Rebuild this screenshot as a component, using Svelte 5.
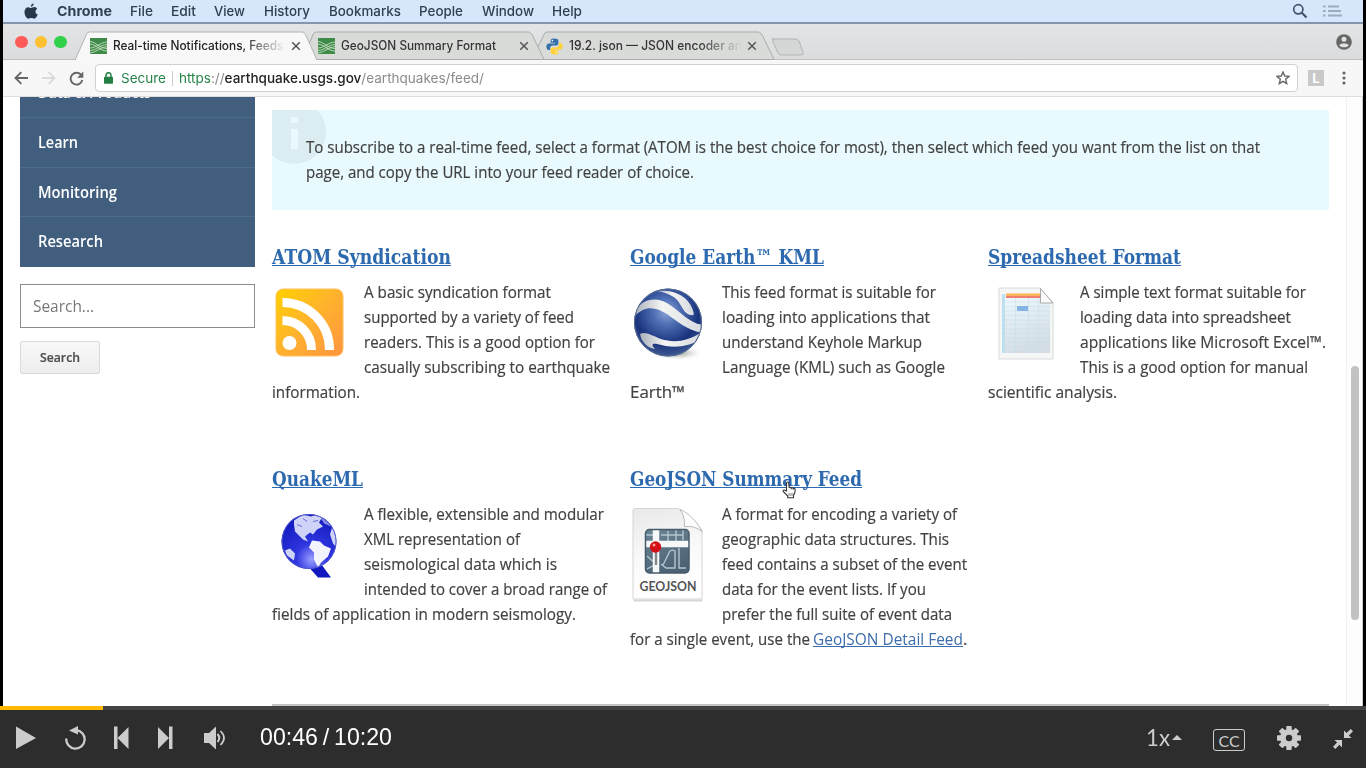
<script>
  const menus = [
    { t: 'File', w: 23, g: 18 }, { t: 'Edit', w: 25, g: 18 }, { t: 'View', w: 31, g: 18 },
    { t: 'History', w: 46, g: 19 }, { t: 'Bookmarks', w: 72, g: 19 }, { t: 'People', w: 44, g: 18 },
    { t: 'Window', w: 52, g: 19 }, { t: 'Help', w: 30, g: 18 }
  ];
  const feeds = [
    { id: 'rss', title: 'ATOM Syndication', tw: 179, side: [
      ['A basic syndication format', 187], ['supported by a variety of feed', 210],
      ['readers. This is a good option for', 231], ['casually subscribing to earthquake', 246]],
      last: ['information.', 88] },
    { id: 'earth', title: 'Google Earth™ KML', tw: 194, side: [
      ['This feed format is suitable for', 214], ['loading into applications that', 208],
      ['understand Keyhole Markup', 200], ['Language (KML) such as Google', 223]],
      last: ['Earth™', 55] },
    { id: 'sheet', title: 'Spreadsheet Format', tw: 193, side: [
      ['A simple text format suitable for', 226], ['loading data into spreadsheet', 211],
      ['applications like Microsoft Excel™.', 246], ['This is a good option for manual', 228]],
      last: ['scientific analysis.', 129] },
    { id: 'quake', title: 'QuakeML', tw: 91, side: [
      ['A flexible, extensible and modular', 240], ['XML representation of', 156],
      ['seismological data which is', 193], ['intended to cover a broad range of', 243]],
      last: ['fields of application in modern seismology.', 304] },
    { id: 'geo', title: 'GeoJSON Summary Feed', tw: 232, side: [
      ['A format for encoding a variety of', 235], ['geographic data structures. This', 227],
      ['feed contains a subset of the event', 245], ['data for the event lists. If you', 204],
      ['prefer the full suite of event data', 230]],
      last: ['for a single event, use the', 180], link: ['GeoJSON Detail Feed', 150] }
  ];

  // Condenses or widens a text run so it spans the given width.
  function fit(node, width) {
    const natural = node.getBoundingClientRect().width;
    node.style.width = width + 'px';
    node.style.transform = `scaleX(${width / natural})`;
  }
</script>

{#snippet usgs()}
  <svg class="fav" width="17" height="16" viewBox="0 0 17 16">
    <rect width="17" height="16" fill="#3f8a49" />
    <g fill="none" stroke="#c4dfc2" stroke-width=".9">
      <path d="M0 3.500C6 4 10 10.500 17 10.500M0 6C6 6.500 10 13 17 13M0 10C6 10 10 4.500 17 4M0 12.500C6 12.500 10 7 17 6.500M0 15C6 14.500 10 9.500 17 8.500" />
    </g>
  </svg>
{/snippet}

{#snippet cross()}
  <svg class="x" width="10" height="10" viewBox="0 0 10 10"><path d="M1.200 1.200l7.600 7.600M8.800 1.200L1.200 8.800" stroke="#5a5a5a" stroke-width="1.600" /></svg>
{/snippet}

<div class="screen">
  <div class="desktop">
    <header class="menubar">
      <svg class="apple" width="14" height="17" viewBox="0 0 14 17" fill="#27384c">
        <path d="M9.600.5c.1 1.700-1.200 3.200-2.800 3.300C6.600 2.200 8 .7 9.600.5zM7 5c.8 0 1.700-.9 3.200-.9 1.200 0 2.300.6 3 1.600-2.500 1.500-2.100 4.800.5 5.800-.7 1.900-2 4.200-3.500 4.200-1.100 0-1.500-.7-2.900-.7s-1.800.7-2.900.7C2.600 15.700.5 12.200.5 9c0-3 1.900-4.800 3.800-4.800C5.600 4.200 6.300 5 7 5z" />
      </svg>
      <b class="fit" use:fit={55}>Chrome</b>
      {#each menus as m}
        <span class="fit" style:margin-left="{m.g}px" use:fit={m.w}>{m.t}</span>
      {/each}
      <span class="grow"></span>
      <svg width="16" height="16" viewBox="0 0 16 16" fill="none" stroke="#43536a"><circle cx="6.300" cy="6.300" r="4.600" stroke-width="1.700" /><path d="M9.800 9.800l4.700 4.700" stroke-width="2.200" /></svg>
      <svg class="list" width="20" height="12" viewBox="0 0 20 12" stroke="#9cabc0" stroke-width="1.800"><path d="M0 1.500h2.500M0 6h2.500M0 10.500h2.500M5 1.500h11M5 6h13M5 10.500h14" /></svg>
    </header>

    <div class="tabstrip">
      <div class="lights"><i class="r"></i><i class="y"></i><i class="g"></i></div>
      <svg class="shapes" width="760" height="36" viewBox="75 24 760 36">
        <path d="M532 59.500l12-25q1-2.500 3-2.500h212l3 2.500 12 25z" fill="#d9dbd9" stroke="#aaadab" />
        <path d="M303 59.500l6-15 4-10q1-2.500 3-2.500h213l3 2.500 12 25z" fill="#d9dbd9" stroke="#aaadab" />
        <path d="M75 60l11.500-25.500q1-2.500 3-2.500h213q2 0 3 2.500L317 60" fill="#f8f8f8" stroke="#b0b2b2" />
        <path d="M772 39h24q2 0 3 2l4 11q1 3-2 3h-20q-2 0-3-2l-5-11q-1-3 1-3z" fill="#d5d7d7" stroke="#b3b5b5" />
      </svg>
      <div class="tab one">{@render usgs()}<span class="label fade"><span class="fit" use:fit={174}>Real-time Notifications, Feeds,</span></span>{@render cross()}</div>
      <div class="tab two">{@render usgs()}<span class="label"><span class="fit" use:fit={155}>GeoJSON Summary Format</span></span>{@render cross()}</div>
      <div class="tab three">
        <svg class="fav" width="17" height="17" viewBox="0 0 17 17">
          <path d="M8.200.5C5 .5 4.600 1.800 4.600 3v1.700h4v.8H2.800C1.200 5.500.4 7 .4 8.700s.9 3.200 2.200 3.200h1.500v-2c0-1.500 1.200-2.500 2.600-2.500h3.600c1.200 0 2.100-.9 2.100-2.100V3C12.400 1.200 10.800.5 8.200.5z" fill="#3571a8" />
          <path d="M8.800 16.500c3.200 0 3.600-1.300 3.600-2.500v-1.700h-4v-.8h5.800c1.600 0 2.400-1.500 2.400-3.200s-.9-3.200-2.200-3.200h-1.500v2c0 1.500-1.200 2.500-2.600 2.500H6.700c-1.200 0-2.100.9-2.100 2.100V14c0 1.800 1.600 2.500 4.200 2.500z" fill="#ffd23a" />
          <circle cx="6.400" cy="2.600" r=".8" fill="#fff" /><circle cx="10.600" cy="14.300" r=".8" fill="#fff" />
        </svg>
        <span class="label fade"><span class="fit" use:fit={173}>19.2. json — JSON encoder an</span></span>{@render cross()}
      </div>
      <svg class="user" width="16" height="16" viewBox="0 0 16 16"><circle cx="8" cy="8" r="7.800" fill="#666" /><circle cx="8" cy="5.200" r="2.500" fill="#dfe1e2" /><path d="M3.200 11.300C4 8.800 12 8.800 12.800 11.300 11 14 5 14 3.200 11.300z" fill="#dfe1e2" /></svg>
    </div>

    <div class="toolbar">
      <svg width="14" height="14" viewBox="0 0 14 14" fill="none" stroke="#666" stroke-width="1.900"><path d="M14 7H1.500M7.300 1.200L1.500 7l5.800 5.800" /></svg>
      <svg class="fwd" width="14" height="14" viewBox="0 0 14 14" fill="none" stroke="#dadada" stroke-width="1.900"><path d="M0 7h12.500M6.700 1.200L12.500 7l-5.800 5.800" /></svg>
      <svg class="reload" width="15" height="15" viewBox="0 0 15 15"><path d="M12.400 4.300A5.900 5.900 0 1 0 13.300 9" fill="none" stroke="#666" stroke-width="1.900" /><path d="M14.300.5v6.200H8.200z" fill="#666" /></svg>
      <div class="address">
        <svg width="9" height="12" viewBox="0 0 9 12"><rect y="4.800" width="9" height="7" rx=".7" fill="#238044" /><path d="M2 5V3.200a2.500 2.500 0 0 1 5 0V5" fill="none" stroke="#238044" stroke-width="1.500" /></svg>
        <span class="fit secure" use:fit={45}>Secure</span>
        <span class="rule"></span>
        <span class="fit url" use:fit={305}><em>https</em>://<b>earthquake.usgs.gov</b>/earthquakes/feed/</span>
        <span class="grow"></span>
        <svg width="14" height="14" viewBox="0 0 14 14"><path d="M7 1l1.700 4 4.300.4-3.300 2.900 1 4.300L7 10.300l-3.700 2.300 1-4.300L1 5.400 5.300 5z" fill="none" stroke="#666" stroke-width="1.400" /></svg>
      </div>
      <span class="ext">L</span>
      <svg class="dots" width="4" height="16" viewBox="0 0 4 16" fill="#666"><circle cx="2" cy="3" r="1.600" /><circle cx="2" cy="8" r="1.600" /><circle cx="2" cy="13" r="1.600" /></svg>
    </div>

    <div class="page">
      <aside>
        <nav>
          <a class="cut"><span class="fit" use:fit={113}>Data &amp; Products</span></a>
          <a><span class="fit" use:fit={40}>Learn</span></a>
          <a><span class="fit" use:fit={79}>Monitoring</span></a>
          <a class="end"><span class="fit" use:fit={65}>Research</span></a>
        </nav>
        <div class="field"><span class="fit" use:fit={61}>Search...</span></div>
        <button><span class="fit" use:fit={40}>Search</span></button>
      </aside>
      <main>
        <div class="notice">
          <svg class="info" width="54" height="54" viewBox="0 0 54 54"><circle cx="22" cy="22" r="32" fill="#dcedf2" /><path d="M19 7h7v6h-7zM19 19h7v20h-7z" fill="#eaf9fd" /></svg>
          <p><span class="fit" use:fit={954}>To subscribe to a real-time feed, select a format (ATOM is the best choice for most), then select which feed you want from the list on that</span></p>
          <p><span class="fit" use:fit={388}>page, and copy the URL into your feed reader of choice.</span></p>
        </div>
        <div class="grid">
          {#each feeds as f}
            <section>
              <h2><a class="fit" use:fit={f.tw}>{f.title}</a></h2>
              <div class="row">
                <div class="pic">
                  {#if f.id === 'rss'}
                    <svg width="74" height="84" viewBox="0 0 74 84">
                      <defs><linearGradient id="or" x1="0" y1="0" x2="1" y2="1"><stop offset="0" stop-color="#ffd000" /><stop offset=".45" stop-color="#ffb52b" /><stop offset="1" stop-color="#ff9440" /></linearGradient></defs>
                      <rect x="4" y="9" width="67" height="67" rx="7" fill="url(#or)" stroke="#ffc15c" />
                      <circle cx="17.500" cy="63" r="7" fill="#fff" />
                      <path d="M10.500 40.500A29 29 0 0 1 39.500 70M10.500 22.500A47 47 0 0 1 57.500 70" fill="none" stroke="#fff" stroke-width="9" />
                    </svg>
                  {:else if f.id === 'earth'}
                    <svg width="80" height="84" viewBox="0 0 80 84">
                      <defs>
                        <radialGradient id="eb" cx=".48" cy=".34" r=".66"><stop offset="0" stop-color="#8da5d8" /><stop offset=".3" stop-color="#4e6eb3" /><stop offset=".72" stop-color="#18327c" /><stop offset="1" stop-color="#3f5a92" /></radialGradient>
                        <linearGradient id="ew" x1="0" x2="1"><stop offset="0" stop-color="#a9b0bb" /><stop offset=".4" stop-color="#f5f5f3" /><stop offset="1" stop-color="#d5d9df" /></linearGradient>
                        <radialGradient id="es"><stop offset="0" stop-color="#858c80" /><stop offset="1" stop-color="#fff" stop-opacity="0" /></radialGradient>
                        <clipPath id="ec"><circle cx="38" cy="42" r="33.500" /></clipPath>
                      </defs>
                      <ellipse cx="48" cy="73" rx="26" ry="8" fill="url(#es)" />
                      <circle cx="38" cy="42.500" r="34" fill="url(#eb)" />
                      <g clip-path="url(#ec)" fill="url(#ew)">
                        <path d="M5 32C12 18 27 16 40 25c12 8 19 18 33 20v8C57 50 48 42 37 34 26 27 15 25 5 36z" />
                        <path d="M27 11c18-2 31 6 35 17 2 5 3 8-1 7-5 0-8-6-11-11C46 17 39 13 27 11z" />
                        <path d="M10 54c5-3 11 1 21 5 12 4 26 3 41-7l-3 8C56 68 41 68 27 64c-5-1-6 1-2 5C17 68 11 61 10 54z" />
                      </g>
                      <circle cx="38" cy="42.500" r="33.500" fill="none" stroke="#5b6f93" />
                    </svg>
                  {:else if f.id === 'sheet'}
                    <svg width="74" height="84" viewBox="0 0 74 84">
                      <defs><linearGradient id="sg" x1="0" y1="0" x2=".3" y2="1"><stop offset="0" stop-color="#effaff" /><stop offset="1" stop-color="#d3dde3" /></linearGradient></defs>
                      <path d="M11 8h41l13 14.500V79H11z" fill="#f5f6f6" stroke="#d8dadb" />
                      <path d="M14 14h39v9h9v50H14z" fill="url(#sg)" />
                      <path d="M14 14h3v59h-3z" fill="#bce0f1" />
                      <path d="M18 13.500h35v2.200H18z" fill="#ffb347" /><path d="M18 15.700h35V18H18z" fill="#f0806c" />
                      <path d="M27.500 18v55M40.500 18v55M50.500 18v55M14 22h48M14 26.500h48M14 31h48M14 35.500h48M14 40h48M14 44.500h48M14 49h48M14 53.500h48M14 58h48M14 62.500h48M14 67h48" stroke="#c3dfeb" stroke-width=".5" />
                      <rect x="29" y="26" width="11" height="5" fill="#86b5e5" />
                      <path d="M52.500 8.500V23h12.500z" fill="#fafafa" stroke="#999" stroke-width=".8" />
                    </svg>
                  {:else if f.id === 'quake'}
                    <svg width="74" height="84" viewBox="0 0 74 84">
                      <defs><radialGradient id="qb" cx=".55" cy=".82" r=".8"><stop offset="0" stop-color="#9ba0ff" /><stop offset=".35" stop-color="#3037df" /><stop offset="1" stop-color="#1018bd" /></radialGradient>
                        <clipPath id="qc"><circle cx="37" cy="39" r="27.500" /></clipPath></defs>
                      <g transform="translate(0 .5)">
                      <path d="M31 64l7 2 8 9h13L48 60z" fill="#1118bd" />
                      <circle cx="37" cy="39" r="27.500" fill="url(#qb)" />
                      <g clip-path="url(#qc)" fill="#cfd3f8">
                        <path d="M22 18l9-6 8 2 6-2 5 3-3 5 4 4-6 3-4 5-3-2-5 4 3 5-5-2-8-8-1-7z" />
                        <path d="M40 38l8 1 4 4 7 3-3 8-7 6-3 5-4-8 0-7-5-5z" fill="#f4f4ff" />
                        <path d="M60 25l6 7v15l-5-6-3-9zM13 48l5-2 5 5-1 7-7-5z" />
                        <path d="M47 13q9 4 12 11l-7-3z" opacity=".6" />
                      </g>
                      <path d="M31 16l4 3M25 22l5 2M41 19l5-1" stroke="#666ed8" fill="none" />
                      <circle cx="37" cy="39" r="27" fill="none" stroke="#5058cf" />
                      </g>
                    </svg>
                  {:else}
                    <svg width="78" height="104" viewBox="0 0 78 104">
                      <defs><linearGradient id="gg" x1="0" y1="0" y2="1" x2=".2"><stop offset="0" stop-color="#e9e9e9" /><stop offset=".6" stop-color="#fafafa" /><stop offset="1" stop-color="#fff" /></linearGradient>
                        <linearGradient id="gm" x1="0" y1="0" x2=".4" y2="1"><stop offset="0" stop-color="#6e8595" /><stop offset="1" stop-color="#4c6375" /></linearGradient><clipPath id="gc"><rect x="15.500" y="26.500" width="43.500" height="43.500" rx="4" /></clipPath></defs>
                      <g transform="translate(0 1)">
                      <path d="M3.500 97.500h69" stroke="#999" stroke-width="2" opacity=".4" />
                      <path d="M3 8q0-2.500 2-2.500h43q12 6 24 22V96H3z" fill="url(#gg)" stroke="#d5d5d5" />
                      <path d="M50 6.500q5 6 4.500 17 11-1 17.500 5C69 21 58 9 50 6.500z" fill="#fdfdfd" stroke="#aaa" stroke-width=".8" />
                      <g clip-path="url(#gc)"><rect x="15" y="26" width="45" height="45" fill="url(#gm)" />
                        <g fill="none" stroke="#b5c5d0" stroke-width="1.400"><path d="M16 32h7M31 32h22M38 28v10M46 27v11M53 27v10M49 45v20h7M33 62l5-10q2-7 7-4v17h-9l-5-4M17 53l9 8-9 5" /></g>
                        <path d="M26 26v45M15 41h45" stroke="#f6f8f9" stroke-width="6.500" /></g>
                      <rect x="15.500" y="26.500" width="43.500" height="43.500" rx="4" fill="none" stroke="#455b6c" stroke-width="1.500" />
                      <path d="M26 49v13" stroke="#7e878c" stroke-width="2.400" /><circle cx="25.500" cy="44" r="5.700" fill="#d50f18" /><circle cx="24" cy="42" r="1.500" fill="#ff9a9a" />
                      <text x="9.500" y="87.500" textLength="57" lengthAdjust="spacingAndGlyphs">GEOJSON</text>
                      </g>
                    </svg>
                  {/if}
                </div>
                <div>
                  {#each f.side as [text, w]}
                    <p><span class="fit" use:fit={w}>{text}</span></p>
                  {/each}
                </div>
              </div>
              <p><span class="fit" use:fit={f.last[1]}>{f.last[0]}</span>{#if f.link}<a class="detail fit" use:fit={f.link[1]}>{f.link[0]}</a>.{/if}</p>
            </section>
          {/each}
        </div>
        <hr />
      </main>
      <div class="track"><div class="thumb"></div></div>
      <svg class="hand" width="15" height="18" viewBox="0 0 15 18"><path d="M4.500 10V2.200c0-1.600 2-1.600 2.200 0L7.200 7c.3-1.200 1.900-1 2.100.3.500-1 1.900-.7 2 .5.800-.7 1.900-.2 1.900.9 0 3-.6 4.500-1.700 6v2H5.700v-1.700L1.200 10.500c-.6-1.300.7-2 1.700-1.200z" fill="#fff" stroke="#333" stroke-width="1.100" /><path d="M7 12v3M9 12v3M11 12v3" stroke="#555" stroke-width=".8" /></svg>
    </div>
  </div>

  <footer>
    <div class="progress"><div></div></div>
    <div class="controls">
      <svg width="20" height="24" viewBox="0 0 20 24" fill="#ccc"><path d="M0 .5L20 12 0 23z" /></svg>
      <svg class="replay" width="22" height="24" viewBox="0 0 22 24"><path d="M1.300 12.500A9.200 9.200 0 1 0 11 4.200" fill="none" stroke="#ccc" stroke-width="2.300" /><path d="M4 4.600L13 0v8.600z" fill="#ccc" /></svg>
      <svg class="prev" width="15" height="24" viewBox="0 0 15 24" fill="#ccc"><path d="M0 .5h3.500v22.500H0zM14.500 1v22L3.500 12z" /></svg>
      <svg class="next" width="15" height="24" viewBox="0 0 15 24" fill="#ccc"><path d="M11 .5h3.500v22.500H11zM0 1v22l11-11z" /></svg>
      <svg class="vol" width="24" height="24" viewBox="0 0 24 24"><path d="M0 7h5l7-6.500v23L5 17H0z" fill="#ccc" /><path d="M13.500 8q3.500 4 0 8" fill="none" stroke="#ccc" stroke-width="2" /><path d="M16.500 5q7 7 0 14" fill="none" stroke="#ccc" stroke-width="1.700" /><path d="M19 3q5 3 3.500 10Q22 17 19 20.500" fill="none" stroke="#ccc" stroke-width="0" /></svg>
      <span class="fit time" use:fit={132}>00:46<i></i>/<i></i>10:20</span>
      <span class="grow"></span>
      <span class="fit rate" use:fit={24}>1x</span>
      <svg class="caret" width="10" height="5" viewBox="0 0 10 5"><path d="M0 5l5-5 5 5z" fill="#ccc" /></svg>
      <span class="cc">CC</span>
      <svg class="gear" width="24" height="24" viewBox="0 0 24 24">
        <g fill="#ccc"><rect x="9.300" y="0" width="5.400" height="24" rx=".8" /><rect x="9.300" y="0" width="5.400" height="24" rx=".8" transform="rotate(45 12 12)" /><rect x="9.300" y="0" width="5.400" height="24" rx=".8" transform="rotate(90 12 12)" /><rect x="9.300" y="0" width="5.400" height="24" rx=".8" transform="rotate(135 12 12)" /><circle cx="12" cy="12" r="9" /></g><circle cx="12" cy="12" r="3.200" fill="#2d2d2d" />
      </svg>
      <svg class="shrink" width="20" height="20" viewBox="0 0 20 20"><path d="M11 1.500V9h7.500l-2.700-2.600L20 2.300 17.700 0l-4.100 4.100zM1.500 11H9v7.500l-2.600-2.700L2.300 20 0 17.700l4.100-4.100z" fill="#ccc" /></svg>
    </div>
  </footer>
</div>

<style>
  :global(body) { background: #000; overflow: hidden; }
  .screen { width: 1366px; height: 768px; display: flex; flex-direction: column; background: #000; }
  .desktop { height: 706px; margin: 0 3px; display: flex; flex-direction: column; overflow: hidden; font-family: Inter, sans-serif; }
  .fit { display: inline-block; white-space: nowrap; transform-origin: 0 50%; flex: none; }
  .grow { flex: 1; }
  svg { display: block; flex: none; }
  .menubar { height: 22px; box-sizing: content-box; border-bottom: 2px solid #8496ac; background: #d7e6fa; display: flex; align-items: center; font-size: 13.500px; font-weight: 500; color: #304054; padding: 0 20px 0 21px; }
  .menubar b { margin-left: 19px; font-weight: 700; }
  .list { margin-left: 15px; }
  .tabstrip { height: 35px; background: linear-gradient(#e2e4e5, #dadcde); border-bottom: 1px solid #bcbebf; display: flex; align-items: center; position: relative; }
  .lights { display: flex; gap: 7px; margin: 1px 0 0 12px; width: 75px; }
  .lights i { width: 12.500px; height: 12.500px; border-radius: 50%; }
  .r { background: #ff5b58; } .y { background: #ffc130; } .g { background: #30d048; }
  .shapes { position: absolute; left: 72px; top: 0; }
  .tab { position: relative; display: flex; align-items: center; font-size: 12.500px; font-weight: 500; color: #333; padding-top: 9px; }
  .one { color: #222; }
  .label { margin-left: 6px; width: 173px; overflow: hidden; height: 20px; line-height: 20px; white-space: nowrap; }
  .fade { mask-image: linear-gradient(to right, #000 75%, transparent 100%); }
  .x { margin-left: 5px; }
  .two { margin-left: 17px; }
  .three { margin-left: 17px; }
  .user { margin: 1px 11px 0 auto; }
  .toolbar { height: 36px; background: #f7f7f7; border-bottom: 1px solid #dedede; display: flex; align-items: center; padding: 0 17px 0 11px; }
  .fwd { margin-left: 14px; }
  .reload { margin-left: 13px; }
  .address { flex: 1; margin-left: 11px; height: 26px; background: #fff; border: 1px solid #d0d0d0; border-radius: 4px; display: flex; align-items: center; padding: 0 7px 0 8px; font-size: 13.500px; }
  .secure { margin-left: 8px; color: #28844a; }
  .rule { width: 1px; height: 15px; background: #ccc; margin: 0 6px 0 6px; }
  .url { color: #8b8b8b; } .url em { font-style: normal; color: #28844a; } .url b { font-weight: 500; color: #222; }
  .ext { width: 16px; height: 16px; background: #c9c9c9; color: #fff; font-size: 13px; font-weight: 700; line-height: 16px; text-align: center; margin: 0 18px 0 10px; }
  .page { height: 609px; position: relative; background: #fff; display: flex; overflow: hidden; font-family: "Open Sans", sans-serif; font-size: 16.300px; color: #424242; -webkit-text-stroke: .2px #424242; }
  aside { width: 235px; margin-left: 17px; flex: none; }
  nav { background: #415e7e; height: 170px; overflow: hidden; color: #fff; font-weight: 600; font-size: 16px; -webkit-text-stroke: 0; }
  nav a { display: flex; align-items: center; height: 48.500px; border-bottom: 1px solid #4a6b8c; padding-left: 18px; }
  nav .cut { height: 49px; margin-top: -29px; align-items: flex-start; line-height: 48px; }
  nav .end { border: 0; }
  .field { margin-top: 17px; height: 42px; border: 1px solid #8c8c8c; display: flex; align-items: center; padding-left: 12px; color: #777; -webkit-text-stroke: 0; }
  button { margin-top: 13px; width: 80px; height: 33px; border: 1px solid #dadada; border-radius: 2px; background: linear-gradient(#f8f8f8, #ededed); font: 600 13px "Open Sans", sans-serif; color: #505050; display: flex; align-items: center; justify-content: center; padding: 0 0 2px; }
  main { margin-left: 17px; width: 1057px; flex: none; }
  p { margin: 0; height: 25px; line-height: 25px; white-space: nowrap; display: flex; }
  .notice { margin-top: 13px; height: 100px; background: #e9faff; position: relative; padding: 25px 34px 0; box-sizing: border-box; }
  .notice p { position: relative; }
  .info { position: absolute; left: 0; top: 0; }
  .grid { display: grid; grid-template-columns: repeat(3, 358px); grid-auto-rows: 222px; margin-top: 31px; height: 463px; width: 1074px; }
  h2 { margin: 0; height: 39px; font: 700 20px/32px "DejaVu Serif", serif; color: #2d69ae; -webkit-text-stroke: 0; }
  h2 a, .detail { text-decoration: underline; text-decoration-thickness: 1px; text-underline-offset: 1px; text-decoration-skip-ink: none; }
  .row { display: flex; }
  .pic { width: 92px; max-height: 100px; flex: none; overflow: visible; }
  .pic svg { margin-bottom: -40px; }
  .pic text { font: 700 13.500px Lato, sans-serif; fill: #555; stroke: none; }
  .detail { color: #3d6dac; -webkit-text-stroke: 0; margin-left: 3px; }
  hr { margin: 0; border: 0; border-top: 2px solid #c4c4c4; }
  .track { position: absolute; right: 0; top: 0; width: 17px; height: 609px; border-left: 1px solid #f1f1f1; border-right: 1px solid #ccc; background: #fdfdfd; box-sizing: border-box; }
  .thumb { width: 8px; height: 254px; margin: 269px 0 0 4px; border-radius: 4px; background: #c2c2c2; }
  .hand { position: absolute; left: 779px; top: 384px; }
  footer { height: 62px; background: #2d2d2d; }
  .progress { height: 4px; background: #444; } .progress div { height: 4px; width: 103px; background: #ffb800; }
  .controls { height: 56px; display: flex; align-items: center; padding: 0 13px 0 16px; color: #fff; }
  .replay { margin-left: 29px; } .prev { margin-left: 27px; } .next { margin-left: 29px; } .vol { margin-left: 31px; }
  .time { margin: -2px 0 0 32px; font: 24px "Liberation Sans", sans-serif; }
  .time i { display: inline-block; width: 5px; }
  .rate { font: 24px Lato, sans-serif; color: #ccc; margin-top: -4px; } .caret { margin-left: 2px; margin-top: -1px; }
  .cc { width: 30px; height: 20px; border: 1.500px solid #ccc; border-radius: 3px; margin: 4px 0 0 31px; color: #ccc; font: 16px/21px Lato, sans-serif; text-align: center; }
  .gear { margin-left: 32px; } .shrink { margin: 2px 0 0 32px; }
</style>
